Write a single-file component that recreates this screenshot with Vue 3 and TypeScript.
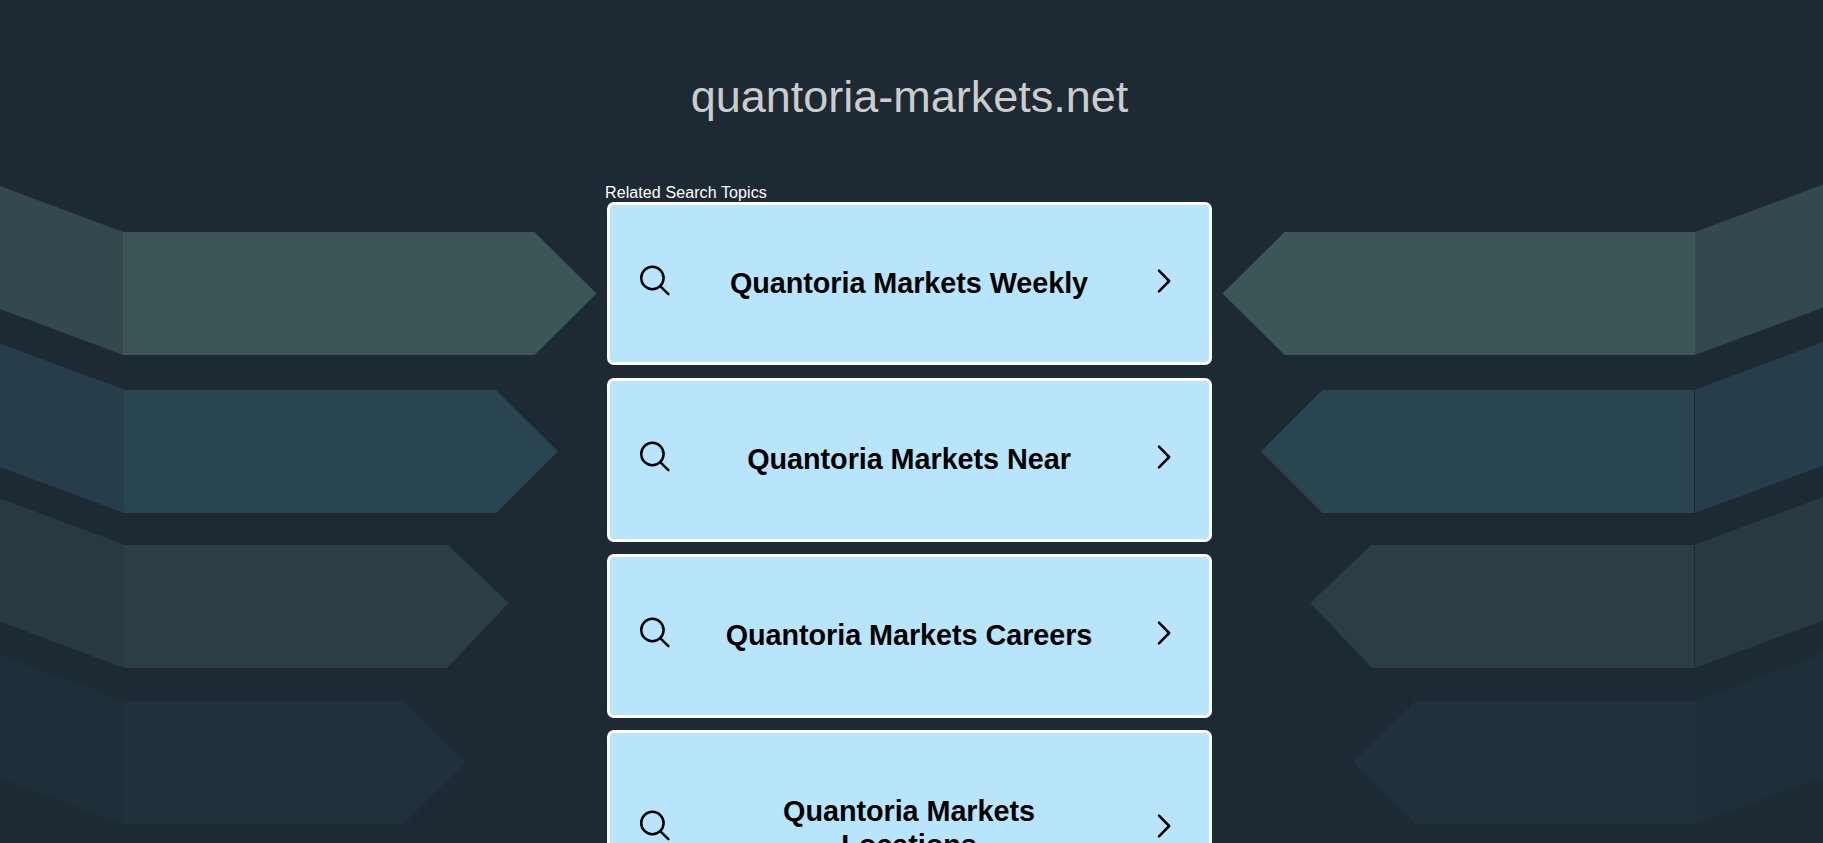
<script setup lang="ts">
interface Band {
  wing: string
  body: string
  tip: string
  rightWing: string
  rightBody: string
  rightTip: string
  fill: string
  shade: string
}

const bands: Band[] = [
  {
    wing: '0,186 123,232 123,355 0,309',
    body: '123,232 535,232 535,355 123,355',
    tip: '534.5,232 596.5,293.5 534.5,355',
    rightWing: '1695,232 1823,184.5 1823,307.5 1695,355',
    rightBody: '1284,232 1695,232 1695,355 1284,355',
    rightTip: '1284.5,232 1222.5,293.5 1284.5,355',
    fill: '#3c5556',
    shade: '#34494e',
  },
  {
    wing: '0,343.5 124,389.5 124,513 0,467',
    body: '124,390 496.5,390 496.5,513 124,513',
    tip: '496,390 558,451.5 496,513',
    rightWing: '1695,389.5 1823,342 1823,465.5 1695,513',
    rightBody: '1322,390 1694,390 1694,513 1322,513',
    rightTip: '1322.5,390 1261,451.5 1322.5,513',
    fill: '#284551',
    shade: '#263d4b',
  },
  {
    wing: '0,498.5 124,544.5 124,668 0,621.5',
    body: '124,545 448,545 448,668 124,668',
    tip: '447.8,545 508.8,603 447.8,667',
    rightWing: '1695,544.5 1823,497 1823,620.5 1695,668',
    rightBody: '1371,545 1694,545 1694,668 1371,668',
    rightTip: '1371.2,545 1310.3,603 1371.2,667',
    fill: '#2c3e45',
    shade: '#283940',
  },
  {
    wing: '0,654.5 123,700.5 123,824 0,778',
    body: '123,701 403.5,701 403.5,824 123,824',
    tip: '403,701 465.5,762.5 403,824',
    rightWing: '1696,700.5 1823,653 1823,776.5 1696,824',
    rightBody: '1415,701 1696,701 1696,824 1415,824',
    rightTip: '1415.5,701 1353,762.5 1415.5,824',
    fill: '#20313b',
    shade: '#1f2f39',
  },
]

const topics: string[] = [
  'Quantoria Markets Weekly',
  'Quantoria Markets Near',
  'Quantoria Markets Careers',
  'Quantoria Markets Locations',
]
</script>

<template>
  <div class="page">
    <svg class="backdrop" viewBox="0 0 1823 843" aria-hidden="true">
      <g v-for="(band, i) in bands" :key="i">
        <polygon :points="band.wing" :fill="band.shade" />
        <polygon :points="band.body" :fill="band.fill" />
        <polygon :points="band.tip" :fill="band.fill" />
        <polygon :points="band.rightWing" :fill="band.shade" />
        <polygon :points="band.rightBody" :fill="band.fill" />
        <polygon :points="band.rightTip" :fill="band.fill" />
      </g>
    </svg>
    <main class="content">
      <h1 class="domain">quantoria-markets.net</h1>
      <p class="caption">Related Search Topics</p>
      <nav class="topics">
        <a v-for="topic in topics" :key="topic" class="topic">
          <svg class="search" viewBox="0 0 32 32" aria-hidden="true">
            <circle cx="13.4" cy="13" r="11.2" />
            <path d="M21.2 21.2L29.4 29.2" />
          </svg>
          <span class="label">{{ topic }}</span>
          <svg class="chevron" viewBox="0 0 14 26" aria-hidden="true">
            <path d="M2 2.6L12.2 13L2 23.4" />
          </svg>
        </a>
      </nav>
    </main>
  </div>
</template>

<style>
body {
  margin: 0;
  background: #1e2a33;
}
</style>

<style scoped>
.page {
  position: relative;
  height: 843px;
  overflow: hidden;
  background: #1e2a33;
  font-family: Arial, "Liberation Sans", sans-serif;
}

.backdrop {
  position: absolute;
  top: 0;
  left: 0;
  width: 1823px;
  height: 843px;
}

.content {
  position: relative;
  width: 609px;
  margin: 0 auto;
}

.domain {
  width: 605px;
  margin: 0;
  padding-top: 71px;
  height: 113px;
  line-height: 52px;
  font-size: 45px;
  font-weight: 400;
  text-align: center;
  color: #ccc;
  white-space: nowrap;
}

.caption {
  margin: 0 0 0 -2px;
  height: 18px;
  line-height: 18px;
  font-size: 16px;
  letter-spacing: 0.1px;
  color: #fff;
}

.topics {
  display: flex;
  flex-direction: column;
  gap: 12.7px;
  width: 605px;
}

.topic {
  display: flex;
  align-items: center;
  box-sizing: border-box;
  flex: none;
  padding: 62px 38px 62px 29px;
  border: 3px solid #fff;
  border-radius: 7px;
  background: #b8e5fc;
  color: #000;
}

.search,
.chevron {
  flex: none;
  margin-top: -5px;
  fill: none;
  stroke: #000;
  stroke-width: 2.5;
  stroke-linecap: round;
  stroke-linejoin: round;
}

.search {
  width: 32px;
  height: 32px;
}

.chevron {
  width: 14px;
  height: 26px;
}

.label {
  flex: 1;
  padding: 0 60px 0 50px;
  line-height: 33.4px;
  font-size: 28.8px;
  letter-spacing: -0.06px;
  font-weight: 700;
  text-align: center;
}
</style>
